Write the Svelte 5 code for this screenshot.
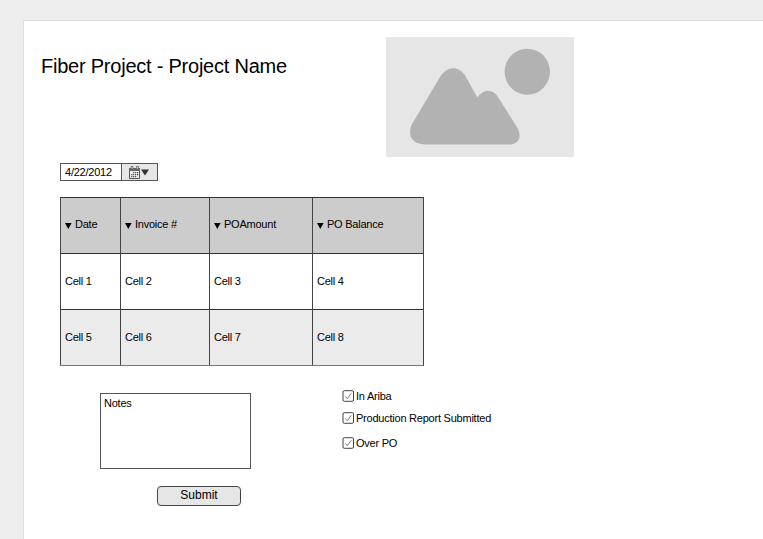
<script>
  const columns = ['Date', 'Invoice #', 'POAmount', 'PO Balance'];
  const rows = [
    ['Cell 1', 'Cell 2', 'Cell 3', 'Cell 4'],
    ['Cell 5', 'Cell 6', 'Cell 7', 'Cell 8']
  ];
  const checks = ['In Ariba', 'Production Report Submitted', 'Over PO'];
</script>

<div class="canvas">
  <main class="sheet">
    <header>
      <h1>Fiber Project - Project Name</h1>
      <svg class="picture" viewBox="0 0 188 120" width="188" height="120" aria-hidden="true">
        <rect width="188" height="120" fill="#e6e6e6" />
        <g fill="#b2b2b2">
          <ellipse cx="141.3" cy="34.8" rx="22.7" ry="23" />
          <path d="M26 87 L54 40 C61 28.500 73 28.500 79.500 39 L86 51 L91.500 60.500 C97 51.500 107 51.500 112 60 L131.500 91 C136 99 133 107.500 123 107.500 H41 C24 107.500 21.500 97 26 87 Z" />
        </g>
      </svg>
    </header>

    <div class="date">
      <span class="value">4/22/2012</span>
      <span class="picker">
        <svg width="22" height="14" viewBox="0 0 22 14" aria-hidden="true">
          <path d="M.5 2.500H10.500V12.500H.5Z" fill="#eee" stroke="#555" />
          <path d="M0 2H11V5H0Z" fill="#666" />
          <path d="M2 .5H4V3H2ZM7.500 .5H9.500V3H7.500Z" fill="#e6e6e6" stroke="#555" stroke-width=".7" />
          <path d="M4 6.700H10M2 8.700H10M2 10.700H8" stroke="#555" stroke-width="1.200" stroke-dasharray="1.300 .7" />
          <path d="M12 3.500H20L16 9.500Z" fill="#333" />
        </svg>
      </span>
    </div>

    <div class="table">
      {#each columns as label}
        <div class="cell head">
          <svg width="7" height="6" viewBox="0 0 7 6" aria-hidden="true"><path d="M0 0H6.600L3.300 6Z" /></svg>
          <span>{label}</span>
        </div>
      {/each}
      {#each rows as row, i}
        {#each row as cell}
          <div class="cell" class:alt={i % 2 === 1}>{cell}</div>
        {/each}
      {/each}
    </div>

    <div class="lower">
      <div class="form">
        <div class="notes">Notes</div>
        <button type="button">Submit</button>
      </div>
      <div class="checks">
        {#each checks as label}
          <div class="check">
            <svg width="12" height="12" viewBox="0 0 12 12" aria-hidden="true">
              <rect x="1" y=".7" width="10.500" height="10.600" rx="1.300" fill="#fff" stroke="#444" />
              <path d="M3.300 6.500L5.300 8.700L9.300 3.300" fill="none" stroke="#777" />
            </svg>
            <span>{label}</span>
          </div>
        {/each}
      </div>
    </div>
  </main>
</div>

<style>
  :global(body) {
    overflow: hidden;
  }
  .canvas {
    box-sizing: border-box;
    height: 539px;
    padding: 20px 0 0 23px;
    background: #eee;
    overflow: hidden;
    font: 11px/14px 'Liberation Sans', Arial, sans-serif;
    letter-spacing: -0.23px;
    color: #000;
  }
  .sheet {
    box-sizing: border-box;
    height: 519px;
    padding: 1px 0 0 1px;
    border-top: 1px solid #ddd;
    border-left: 1px solid #ddd;
    background: #fff;
  }
  header {
    display: flex;
    height: 141px;
    padding-left: 16px;
  }
  h1 {
    flex: none;
    width: 345px;
    margin: 32px 0 0;
    font-size: 20px;
    line-height: 24px;
    font-weight: 400;
    white-space: nowrap;
  }
  .picture {
    margin-top: 15px;
  }
  .date {
    box-sizing: border-box;
    display: flex;
    width: 98px;
    height: 18px;
    margin-left: 35px;
    border: 1px solid #555;
  }
  .value {
    width: 56px;
    padding-left: 4px;
    line-height: 17px;
    white-space: nowrap;
  }
  .picker {
    flex: 1;
    padding: 2px 0 0 7px;
    border-left: 1px solid #555;
    background: #e6e6e6;
    line-height: 0;
  }
  .table {
    display: grid;
    grid-template-columns: 60px 89px 103px 111px;
    grid-auto-rows: 56px;
    width: 363px;
    margin: 16px 0 0 35px;
    border-right: 1px solid #444;
    border-bottom: 1px solid #777;
  }
  .cell {
    display: flex;
    align-items: center;
    padding: 0 0 2px 4px;
    border-top: 1px solid #333;
    border-left: 1px solid #444;
    white-space: nowrap;
  }
  .head {
    gap: 3px;
    padding-bottom: 4px;
    background: #ccc;
  }
  .head svg {
    margin-top: 5px;
  }
  .alt {
    background: #ebebeb;
  }
  .lower {
    display: flex;
    align-items: flex-start;
    padding: 23px 0 0 75px;
  }
  .form {
    flex: none;
    width: 242px;
    padding-top: 4px;
  }
  .notes {
    box-sizing: border-box;
    width: 151px;
    height: 76px;
    padding: 2px 3px;
    border: 1px solid #555;
  }
  button {
    display: block;
    box-sizing: border-box;
    width: 84px;
    height: 20px;
    margin: 17px 0 0 57px;
    padding: 0 0 2px;
    border: 1px solid #444;
    border-radius: 4px;
    background: #e6e6e6;
    color: #000;
    font: 12px/16px 'Liberation Sans', Arial, sans-serif;
  }
  .checks {
    display: flex;
    flex-direction: column;
  }
  .check {
    display: flex;
    align-items: center;
    gap: 2px;
    height: 14px;
    margin-bottom: 8px;
    white-space: nowrap;
  }
  .check:nth-child(2) {
    margin-bottom: 11px;
  }
</style>
